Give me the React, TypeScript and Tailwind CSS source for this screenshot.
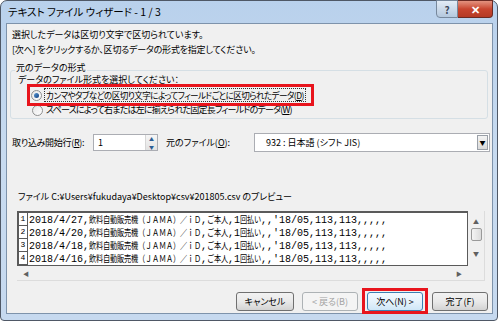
import React from 'react';

const rows = [
  "2018/4/27,飲料自動販売機（ＪＡＭＡ）／ｉＤ,ご本人,1回払い,,'18/05,113,113,,,,,",
  "2018/4/20,飲料自動販売機（ＪＡＭＡ）／ｉＤ,ご本人,1回払い,,'18/05,113,113,,,,,",
  "2018/4/18,飲料自動販売機（ＪＡＭＡ）／ｉＤ,ご本人,1回払い,,'18/05,113,113,,,,,",
  "2018/4/16,飲料自動販売機（ＪＡＭＡ）／ｉＤ,ご本人,1回払い,,'18/05,113,113,,,,,",
];

// fixed cells: half-width 6px, full-width 7px, like the squeezed MS Gothic in the shot
const Mixed = ({ text }: { text: string }) => (
  <>
    {Array.from(text).map((c, i) =>
      c.charCodeAt(0) > 0xff ? (
        <span key={i} className="inline-flex justify-center w-[7px]">
          <span className="inline-block font-['Noto_Sans_CJK_JP',sans-serif] text-[9px] scale-x-[0.8]">{c}</span>
        </span>
      ) : (
        <span key={i} className="inline-flex justify-center w-[6px]">
          {c}
        </span>
      ),
    )}
  </>
);

const Radio = ({ checked }: { checked?: boolean }) => (
  <div className="w-[11px] h-[11px] rounded-full border border-[#8e8f8f] bg-linear-to-br from-[#e6e6e6] to-white flex items-center justify-center shrink-0">
    {checked && <div className="w-[5px] h-[5px] rounded-full bg-linear-to-br from-[#5a9ad5] to-[#123f80]" />}
  </div>
);

const Button = ({ label, disabled, focused }: { label: string; disabled?: boolean; focused?: boolean }) => (
  <div
    className={
      disabled
        ? 'h-[19px] w-[56px] rounded-[3px] border border-[#adb2b5] bg-[#f4f4f4] text-[#a3a3a3] flex items-center justify-center'
        : focused
          ? 'h-[19px] w-[56px] rounded-[3px] border border-[#3c7fb1] bg-linear-to-b from-[#f4fafe] via-[#e5f2fb] to-[#cfe6f7] flex items-center justify-center'
          : 'h-[19px] w-[56px] rounded-[3px] border border-[#707070] bg-linear-to-b from-[#f2f2f2] via-[#e9e9e9] to-[#d3d3d3] flex items-center justify-center'
    }
  >
    {label}
  </div>
);

export default function App() {
  return (
    <div className="w-[500px] h-[324px] bg-white font-['Noto_Sans_CJK_JP',sans-serif] [font-feature-settings:'palt'] text-[9px] text-black whitespace-nowrap">
      <div className="w-[498px] h-[321px] flex flex-col rounded-t-[7px] rounded-b-[4px] border border-[#4f5866] bg-linear-to-b from-[#b9d1ec] via-[#c8dbf0] to-[#c6d9ef]">
        {/* title bar */}
        <div className="h-[22px] flex items-start">
          <div className="pl-[7px] pt-[3px] text-[10.5px] leading-[16px]">テキスト ファイル ウィザード - 1 / 3</div>
          <div className="ml-auto mr-[4px] -mt-[1px] flex">
            <div className="w-[22px] h-[18px] rounded-bl-[4px] border border-[#77889c] bg-linear-to-b from-[#e3ecf6] to-[#b4c8de] flex items-center justify-center text-[10px] font-bold text-[#3d4a5c]">
              ?
            </div>
            <div className="w-[35px] h-[18px] rounded-br-[4px] border border-l-0 border-[#6b2a23] bg-linear-to-b from-[#e3927f] via-[#c8452f] to-[#b53a25] flex items-center justify-center text-[11px] font-bold text-white">
              ✕
            </div>
          </div>
        </div>

        {/* client area */}
        <div className="flex-1 ml-[5px] mr-[4px] mb-[6px] border border-[#7e93ab] bg-[#f0f0f0] flex flex-col">
          <div className="pt-[3px] pl-[5px] leading-[15px]">
            <div>選択したデータは区切り文字で区切られています。</div>
            <div className="tracking-[-0.2px]">[次へ] をクリックするか、区切るデータの形式を指定してください。</div>
          </div>

          {/* group box */}
          <div className="relative mt-[13px] ml-[3px] mr-[4px] h-[49px] border border-[#d5dfe5] rounded-[3px]">
            <div className="absolute -top-[11px] left-[4px] px-[1px] bg-[#f0f0f0] leading-[15px]">元のデータの形式</div>
            <div className="pt-[3px] pl-[7px] leading-[12px]">データのファイル形式を選択してください：</div>
            <div className="relative z-10 -mt-[2px] ml-[16px] w-[287px] h-[22px] border-[3px] border-[#e8141c] flex items-center">
              <div className="ml-[1px]">
                <Radio checked />
              </div>
              <div className="ml-[2px] px-[1px] border border-dotted border-[#333] leading-[12px] text-[8.6px] tracking-[-0.6px]">
                カンマやタブなどの区切り文字によってフィールドごとに区切られたデータ(<span className="underline">D</span>)
              </div>
            </div>
            <div className="-mt-[2px] ml-[21px] flex items-center gap-[3px] leading-[12px] tracking-[-0.8px]">
              <Radio />
              <div>スペースによって右または左に揃えられた固定長フィールドのデータ(<span className="underline">W</span>)</div>
            </div>
          </div>

          {/* start row / origin */}
          <div className="mt-[14px] pl-[5px] h-[19px] flex items-center">
            <div className="w-[81px] tracking-[-0.3px]">取り込み開始行(<span className="underline">R</span>):</div>
            <div className="w-[65px] h-[17px] border border-[#abadb3] bg-white flex">
              <div className="flex-1 pl-[4px] leading-[15px]">1</div>
              <div className="w-[12px] flex flex-col border-l border-[#d6d6d6] bg-linear-to-b from-[#f6f6f6] to-[#e2e2e2]">
                <div className="flex-1 flex items-center justify-center text-[5px] text-[#2c5d93]">▲</div>
                <div className="flex-1 flex items-center justify-center text-[5px] text-[#2c5d93]">▼</div>
              </div>
            </div>
            <div className="ml-[8px] w-[88px]">元のファイル(<span className="underline">O</span>):</div>
            <div className="w-[236px] h-[19px] border border-[#abadb3] bg-white flex items-center">
              <div className="flex-1 pl-[11px]">932 : 日本語 (シフト JIS)</div>
              <div className="w-[11px] h-[15px] mr-[1px] border border-[#9aa0a8] bg-linear-to-b from-[#f4f4f4] to-[#dadada] flex items-center justify-center text-[6px]">
                ▼
              </div>
            </div>
          </div>

          {/* preview */}
          <div className="mt-[38px] pl-[11px] leading-[14px]">
            ファイル C:¥Users¥fukudaya¥Desktop¥csv¥201805.csv のプレビュー
          </div>
          <div className="mt-[7px] ml-[10px] w-[468px] h-[70px] border-r border-b border-[#dcdcdc] flex">
            <div className="w-[451px] flex flex-col">
              <div className="h-[55px] border-t-2 border-l-2 border-r border-b border-[#5a5a5a] bg-white overflow-hidden font-['Liberation_Mono',monospace] [font-feature-settings:normal] text-[10px]">
                {rows.map((r, i) => (
                  <div key={i} className="h-[13px] flex items-center">
                    <div className="w-[9px] h-[13px] border-r border-b border-[#5a5a5a] text-[8px] leading-[12px] text-center shrink-0">
                      {i + 1}
                    </div>
                    <div className="pl-[1px] leading-[13px]">
                      <Mixed text={r} />
                    </div>
                  </div>
                ))}
              </div>
              <div className="flex-1 flex items-center justify-between px-[6px] text-[6px] text-[#606060]">
                <span>◀</span>
                <span>▶</span>
              </div>
            </div>
            <div className="flex-1 flex flex-col items-center pt-[6px] text-[6px] text-[#606060]">
              <span>▲</span>
              <div className="mt-[2px] w-[11px] h-[13px] rounded-[2px] border border-[#9a9a9a] bg-linear-to-r from-[#f4f4f4] to-[#dcdcdc]" />
              <span className="mt-[8px]">▼</span>
            </div>
          </div>

          {/* buttons */}
          <div className="mt-auto mb-[2px] pr-[4px] flex justify-end items-center">
            <div className="h-[19px] w-[58px] rounded-[3px] border border-[#707070] bg-linear-to-b from-[#f2f2f2] via-[#e9e9e9] to-[#d3d3d3] flex items-center justify-center">
              キャンセル
            </div>
            <div className="ml-[8px]">
              <Button label="< 戻る(B)" disabled />
            </div>
            <div className="ml-[9px] relative">
              <Button label="次へ(N) >" focused />
              <div className="absolute -left-[5px] -right-[5px] -top-[4px] -bottom-[3px] border-[3px] border-[#e8141c]" />
            </div>
            <div className="ml-[9px]">
              <Button label="完了(F)" />
            </div>
          </div>
        </div>
      </div>
    </div>
  );
}
